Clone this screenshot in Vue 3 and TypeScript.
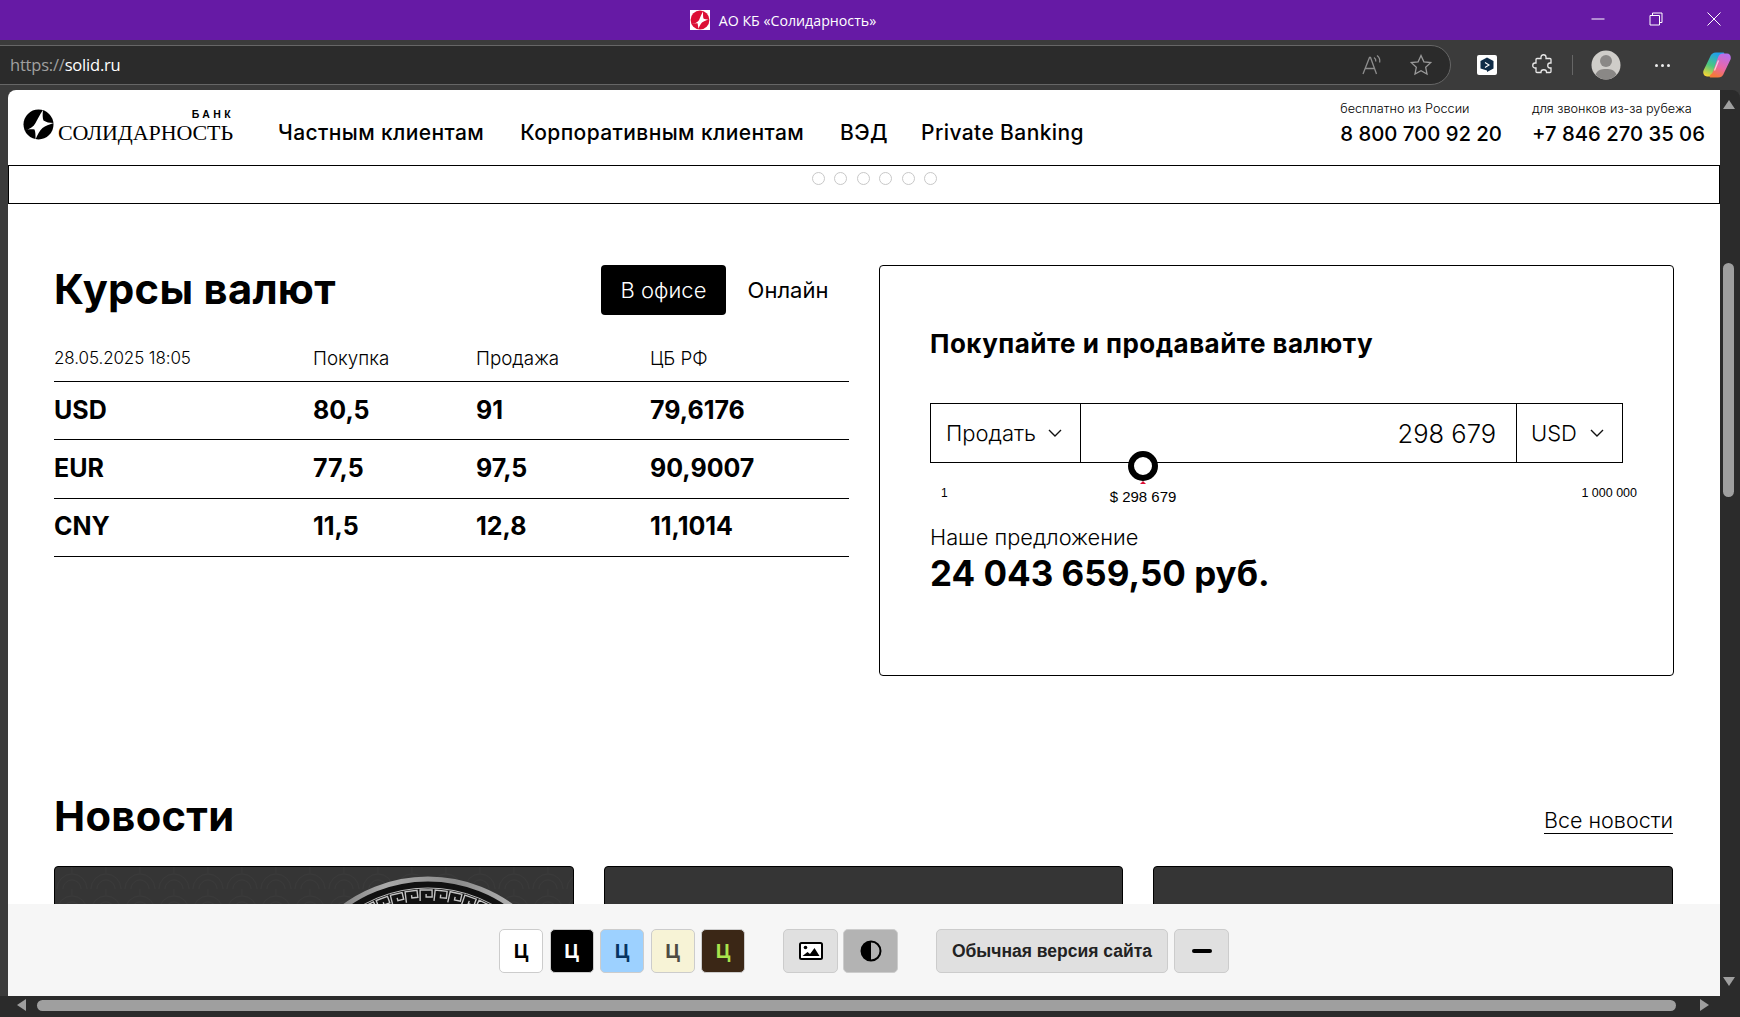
<template>
  <div class="window">
    <!-- Browser chrome -->
    <div class="titlebar">
      <div class="title">
        <span class="favicon">
          <svg width="20" height="20" viewBox="0 0 20 20">
            <rect width="20" height="20" fill="#fff" />
            <circle cx="10" cy="10" r="9.4" fill="#dc0f35" />
            <path d="M2 14C6.500 13 8.500 11.500 9.500 9 10.500 6.500 11.500 4 13 1.500 13 5 13 7 13.500 8.500 15 9.300 16.500 9.500 18.500 9.500 15.500 10.500 13.500 11.500 12 12.500 10.500 14 9.500 16 8.500 18.800 8 16.500 8 14.800 7.500 13.200 6 13 4 13.300 2 14Z" fill="#fff" />
          </svg>
        </span>
        <span>АО КБ «Солидарность»</span>
      </div>
      <div class="win-controls">
        <svg width="16" height="16" viewBox="0 0 16 16"><path d="M1.500 8h13" stroke="#fff" fill="none" /></svg>
        <svg width="16" height="16" viewBox="0 0 16 16"><path d="M2 4.500h9.500v9.500H2zM4.500 4.500V2h9.500v9.500h-2.500" stroke="#fff" fill="none" /></svg>
        <svg width="16" height="16" viewBox="0 0 16 16"><path d="M1.500 1.500l13 13M14.500 1.500l-13 13" stroke="#fff" fill="none" /></svg>
      </div>
    </div>
    <div class="toolbar">
      <div class="address">
        <div class="url"><span class="scheme">https://</span>solid.ru</div>
        <svg class="addr-icon" width="22" height="22" viewBox="0 0 22 22" fill="none" stroke="#8d8d8d" stroke-width="1.300">
          <path d="M2 20L8.500 3.500h1L15.500 20M4.500 14.500h8.500" />
          <path d="M13 3.500c1.500 1 2 2.500 1.800 4M16 1.500c2.300 1.700 3.200 4 2.700 7" />
        </svg>
        <svg class="addr-icon star" width="24" height="24" viewBox="0 0 24 24" fill="none" stroke="#9a9a9a" stroke-width="1.300">
          <path d="M12 2.500l2.900 6.300 6.800.8-5 4.700 1.300 6.800-6-3.400-6 3.400 1.300-6.800-5-4.700 6.800-.8z" />
        </svg>
      </div>
      <div class="tools">
        <span class="deepl">
          <svg width="20" height="20" viewBox="0 0 20 20">
            <rect width="20" height="20" rx="2" fill="#fff" />
            <path d="M10 2.500l6.500 3.500v7.500L10 17v-1.500L3.500 13.500V6z" fill="#0f2b46" />
            <path d="M8 7.500l4 2.500-4 2.500" fill="none" stroke="#fff" stroke-width="1.100" />
          </svg>
        </span>
        <svg class="puzzle" width="22" height="24" viewBox="0 0 22 24" fill="none" stroke="#e8e8e8" stroke-width="1.300">
          <path d="M9 4c0-3 5-3 5 0v1.500h4c.8 0 1 .5 1 1V10h-1c-3 0-3 5 0 5h1v3.500c0 .7-.4 1-1 1h-3.500V19c0-3-5.500-3-5.500 0v.5H5c-.7 0-1-.4-1-1V15H3c-3 0-3-5 0-5h1V6.500c0-.7.400-1 1-1h4z" />
        </svg>
        <span class="tool-sep"></span>
        <span class="avatar">
          <svg width="30" height="30" viewBox="0 0 30 30">
            <circle cx="15" cy="15" r="14.500" fill="#cfcdc9" />
            <circle cx="15" cy="11" r="6" fill="#8a8886" />
            <path d="M4.500 24.500C6.500 20 10 19 15 19s8.500 1 10.500 5.500C23 27.800 19 29.500 15 29.500S7 27.800 4.500 24.500Z" fill="#8a8886" />
          </svg>
        </span>
        <span class="more"><i></i><i></i><i></i></span>
        <svg class="copilot" width="28" height="26" viewBox="0 0 28 26">
          <defs>
            <linearGradient id="cp-a" x1="0.600" y1="0" x2="0.200" y2="1">
              <stop offset="0" stop-color="#1f9fef" />
              <stop offset="0.550" stop-color="#4cc77f" />
              <stop offset="1" stop-color="#f9d633" />
            </linearGradient>
            <linearGradient id="cp-b" x1="0.800" y1="0" x2="0.400" y2="1">
              <stop offset="0" stop-color="#b56ff0" />
              <stop offset="0.600" stop-color="#ea67a6" />
              <stop offset="1" stop-color="#f5793a" />
            </linearGradient>
          </defs>
          <path d="M7 5C8 2 10 .5 13 .5h7c1.500 0 1.500 1 1 2-.8 1.500-2 1.500-3 4l-5 14c-.8 2.500-2.500 4-5 4H4C1 24.500-.5 21.500.5 18.500z" fill="url(#cp-a)" />
          <path d="M21 21c-1 3-3 4.500-6 4.500H8c-1.500 0-1.500-1-1-2 .8-1.500 2-1.500 3-4l5-14c.8-2.500 2.500-4 5-4h4c3 0 4.500 3 3.500 6z" fill="url(#cp-b)" />
          <path d="M15.500 8.500l-4 10" stroke="#fff" stroke-opacity="0.700" stroke-width="1.200" fill="none" />
        </svg>
      </div>
    </div>

    <div class="viewport">
      <div class="page">
        <!-- Site header -->
        <header class="site-header">
          <div class="logo">
            <svg class="logo-mark" width="31" height="31" viewBox="0 0 31 31">
              <circle cx="15.500" cy="15.500" r="15" fill="#000" />
              <path d="M1 21.500C6.500 20.300 10.500 18 12.500 14 14.500 10 17 5.500 20 1 19.500 5.500 19.500 9 20.500 11.500 23 13.200 26.500 14 30.500 14 26 15.500 22.500 17 19.500 19 16.500 22 14.500 25.500 12.500 30.500 12.500 26 12.500 23 11.500 20.500 8 20 5 20.500 1 21.500Z" fill="#fff" />
            </svg>
            <div class="logo-words">
              <span class="logo-bank">БАНК</span>
              <span class="logo-name">СОЛИДАРНОСТЬ</span>
            </div>
          </div>
          <nav class="nav">
            <a v-for="item in navItems" :key="item">{{ item }}</a>
          </nav>
          <div class="phones">
            <div v-for="p in phones" :key="p.number" class="phone">
              <span class="phone-note">{{ p.note }}</span>
              <span class="phone-number">{{ p.number }}</span>
            </div>
          </div>
        </header>

        <div class="slider-strip">
          <span v-for="n in 6" :key="n" class="dot"></span>
        </div>

        <!-- Rates and converter -->
        <section class="rates-section">
          <div class="rates">
            <div class="rates-head">
              <h2 class="h-big">Курсы валют</h2>
              <div class="tabs">
                <span class="tab active">В офисе</span>
                <span class="tab">Онлайн</span>
              </div>
            </div>
            <div class="rate-row rate-caption">
              <span class="rate-date">28.05.2025 18:05</span>
              <span>Покупка</span>
              <span>Продажа</span>
              <span>ЦБ РФ</span>
            </div>
            <div v-for="r in rates" :key="r.code" class="rate-row rate-value">
              <span>{{ r.code }}</span>
              <span>{{ r.buy }}</span>
              <span>{{ r.sell }}</span>
              <span>{{ r.cb }}</span>
            </div>
          </div>

          <div class="converter">
            <h3 class="conv-title">Покупайте и продавайте валюту</h3>
            <div class="conv-form">
              <div class="conv-cell conv-action">
                <span>Продать</span>
                <svg width="14" height="8" viewBox="0 0 14 8" fill="none" stroke="#111" stroke-width="1.400"><path d="M1 1l6 6 6-6" /></svg>
              </div>
              <div class="conv-cell conv-amount">298 679</div>
              <div class="conv-cell conv-currency">
                <span>USD</span>
                <svg width="14" height="8" viewBox="0 0 14 8" fill="none" stroke="#111" stroke-width="1.400"><path d="M1 1l6 6 6-6" /></svg>
              </div>
              <span class="knob"><i class="knob-tick"></i></span>
            </div>
            <div class="scale">
              <span class="scale-min">1</span>
              <span class="scale-cur">$ 298 679</span>
              <span class="scale-max">1 000 000</span>
            </div>
            <div class="offer-label">Наше предложение</div>
            <div class="offer-value">24 043 659,50 руб.</div>
          </div>
        </section>

        <!-- News -->
        <section class="news">
          <div class="news-head">
            <h2 class="h-big">Новости</h2>
            <a class="all-news">Все новости</a>
          </div>
          <div class="news-grid">
            <div class="news-card">
              <svg class="medal" width="518" height="40" viewBox="0 0 518 40">
                <defs>
                  <linearGradient id="rim" x1="0" y1="0" x2="1" y2="0">
                    <stop offset="0" stop-color="#555" />
                    <stop offset="0.350" stop-color="#aaa" />
                    <stop offset="0.600" stop-color="#8a8a8a" />
                    <stop offset="1" stop-color="#d8d8d8" />
                  </linearGradient>
                  <pattern id="weave" width="34" height="22" patternUnits="userSpaceOnUse">
                    <path d="M2 22a15 15 0 0 1 30 0M8 22a9 9 0 0 1 18 0M17 0v6" fill="none" stroke="#3a3a3a" />
                  </pattern>
                </defs>
                <rect width="518" height="40" fill="url(#weave)" />
                <circle cx="373" cy="154" r="142" fill="#111" stroke="url(#rim)" stroke-width="5" />
                <circle cx="373" cy="154" r="133" fill="none" stroke="#bdbdbd" />
                <path v-for="(t, i) in meander" :key="i" :transform="t" d="M-7 12V1H5V8H-1V5" fill="none" stroke="#c4c4c4" stroke-width="1.400" />
              </svg>
            </div>
            <div class="news-card"></div>
            <div class="news-card"></div>
          </div>
        </section>

        <!-- Accessibility panel, pinned over the page -->
        <div class="a11y">
          <div class="a11y-group swatch-group">
            <button v-for="s in swatches" :key="s.cls" class="swatch" :class="s.cls">Ц</button>
          </div>
          <div class="a11y-group mode-group">
            <button class="mode">
              <svg width="24" height="18" viewBox="0 0 24 18">
                <rect x="1" y="1" width="22" height="16" rx="1.500" fill="#fff" stroke="#000" stroke-width="2" />
                <circle cx="6.500" cy="5.500" r="1.800" fill="#000" />
                <path d="M3.500 14l5-4 2.500 2 4.500-6 5 8z" fill="#000" />
              </svg>
            </button>
            <button class="mode pressed">
              <svg width="22" height="22" viewBox="0 0 22 22">
                <circle cx="11" cy="11" r="9.500" fill="none" stroke="#000" stroke-width="2" />
                <path d="M11 1.500a9.500 9.500 0 0 0 0 19z" fill="#000" />
              </svg>
            </button>
          </div>
          <div class="a11y-group plain-group">
            <button class="plain">Обычная версия сайта</button>
            <button class="plain collapse"><i></i></button>
          </div>
        </div>
      </div>

      <!-- Vertical scrollbar -->
      <div class="vscroll">
        <span class="arrow-up"></span>
        <span class="vthumb"></span>
        <span class="arrow-down"></span>
      </div>
    </div>

    <!-- Horizontal scrollbar -->
    <div class="hscroll">
      <span class="arrow-left"></span>
      <span class="hthumb"></span>
      <span class="arrow-right"></span>
    </div>
  </div>
</template>

<script setup lang="ts">
const navItems: string[] = ['Частным клиентам', 'Корпоративным клиентам', 'ВЭД', 'Private Banking']

const phones = [
  { note: 'бесплатно из России', number: '8 800 700 92 20' },
  { note: 'для звонков из-за рубежа', number: '+7 846 270 35 06' },
]

const rates = [
  { code: 'USD', buy: '80,5', sell: '91', cb: '79,6176' },
  { code: 'EUR', buy: '77,5', sell: '97,5', cb: '90,9007' },
  { code: 'CNY', buy: '11,5', sell: '12,8', cb: '11,1014' },
]

const swatches = [
  { cls: 'sw-white' },
  { cls: 'sw-black' },
  { cls: 'sw-blue' },
  { cls: 'sw-cream' },
  { cls: 'sw-brown' },
]

// greek key border of the medal, one unit every 6.6 degrees round the circle
const meander: string[] = []
for (let a = -40; a <= 40; a += 6.6) {
  meander.push(`rotate(${a} 373 154) translate(373 22)`)
}
</script>

<style scoped>
.window {
  width: 1740px;
  height: 1017px;
  display: flex;
  flex-direction: column;
  overflow: hidden;
  background: #3b3b3b;
  font-family: Inter, "Noto Sans", sans-serif;
  color: #000;
}

.titlebar {
  height: 40px;
  flex: none;
  background: #661aa5;
  position: relative;
  display: flex;
  align-items: center;
  justify-content: center;
  padding-right: 174px;
  box-sizing: border-box;
}

.title {
  display: flex;
  align-items: center;
  gap: 9px;
  font-family: "Open Sans", sans-serif;
  font-size: 14.200px;
  color: #fff;
}

.favicon {
  display: flex;
}

.win-controls {
  position: absolute;
  right: 18px;
  top: 11px;
  display: flex;
  gap: 42px;
}

.toolbar {
  height: 50px;
  flex: none;
  display: flex;
  background: #3b3b3b;
}

.address {
  width: 1453px;
  height: 40px;
  margin-top: 5px;
  box-sizing: border-box;
  margin-left: -2px;
  padding: 0 17px 0 11px;
  background: #2b2b2b;
  border: 1px solid #666;
  border-radius: 0 20px 20px 0;
  display: flex;
  align-items: center;
}

.url {
  flex: 1;
  margin-top: -2px;
  font-family: "Open Sans", sans-serif;
  font-size: 16.500px;
  letter-spacing: -0.200px;
  color: #fff;
}

.scheme {
  color: #a0a0a0;
}

.addr-icon {
  flex: none;
}

.star {
  margin-left: 26px;
}

.tools {
  flex: 1;
  display: flex;
  align-items: center;
  padding-left: 26px;
  height: 50px;
}

.deepl {
  display: flex;
}

.puzzle {
  margin-left: 35px;
}

.tool-sep {
  width: 1px;
  height: 20px;
  background: #666;
  margin-left: 18px;
}

.avatar {
  display: flex;
  margin-left: 18px;
}

.more {
  display: flex;
  gap: 3px;
  margin-left: 34px;
}

.more i {
  width: 3px;
  height: 3px;
  border-radius: 50%;
  background: #eee;
}

.copilot {
  margin-left: 33px;
}

.viewport {
  flex: 1;
  min-height: 0;
  display: flex;
  padding-left: 8px;
}

.page {
  flex: 1;
  min-width: 0;
  position: relative;
  overflow: hidden;
  background: #fff;
  border-top-left-radius: 8px;
}

.site-header {
  height: 76px;
  box-sizing: border-box;
  border-bottom: 1px solid #000;
  display: flex;
  padding-left: 15px;
}

.logo {
  display: flex;
  flex: none;
  width: 255px;
  height: 40px;
  margin-top: 19px;
}

.logo-mark {
  flex: none;
}

.logo-words {
  display: flex;
  flex-direction: column;
  align-items: flex-end;
  margin-left: 4px;
  width: 175px;
}

.logo-bank {
  font-family: "Liberation Sans", sans-serif;
  font-weight: 700;
  font-size: 10.500px;
  line-height: 11px;
  letter-spacing: 3.400px;
  margin-right: -1px;
}

.logo-name {
  font-family: "Liberation Serif", serif;
  font-size: 22px;
  line-height: 23px;
  letter-spacing: -0.100px;
  white-space: nowrap;
  margin-top: 1px;
}

.nav {
  display: flex;
  gap: 36px;
  padding-top: 28px;
  font-size: 21px;
  font-weight: 500;
  line-height: 30px;
  letter-spacing: 0.400px;
  white-space: nowrap;
}

.nav a:last-child {
  margin-left: -3px;
}

.phones {
  margin-left: auto;
  display: flex;
  gap: 30px;
  padding-right: 15px;
}

.phone {
  display: flex;
  flex-direction: column;
}

.phone-note {
  font-size: 12.700px;
  font-weight: 300;
  line-height: 18px;
  margin-top: 10px;
  white-space: nowrap;
}

.phone-number {
  font-size: 20.300px;
  font-weight: 500;
  line-height: 30px;
  margin-top: 1px;
  white-space: nowrap;
}

.slider-strip {
  height: 38px;
  box-sizing: border-box;
  border-bottom: 1px solid #000;
  border-right: 1px solid #000;
  border-left: 1px solid #000;
  display: flex;
  justify-content: center;
  gap: 9.500px;
  padding-top: 6px;
  padding-left: 21px;
}

.dot {
  width: 13px;
  height: 13px;
  box-sizing: border-box;
  border: 1px solid #c8c8c8;
  border-radius: 50%;
}

.rates-section {
  display: grid;
  grid-template-columns: 795px 795px;
  gap: 30px;
  padding: 61px 46px 0;
}

.rates-head {
  display: flex;
  align-items: center;
  justify-content: space-between;
  height: 50px;
  margin-bottom: 15px;
}

.h-big {
  margin: 0;
  font-size: 41.700px;
  font-weight: 700;
  letter-spacing: 0.300px;
  line-height: 48px;
  padding-bottom: 2px;
}

.tabs {
  display: flex;
  margin-right: -1px;
}

.tab {
  width: 124px;
  height: 50px;
  box-sizing: border-box;
  display: flex;
  align-items: center;
  justify-content: center;
  font-size: 22px;
  font-weight: 400;
  border-radius: 4px;
  white-space: nowrap;
}

.tab.active {
  width: 125px;
  background: #000;
  color: #fff;
  font-weight: 300;
}

.rate-row {
  display: grid;
  grid-template-columns: 259px 163px 174px 1fr;
  align-items: center;
  border-bottom: 1px solid #000;
  box-sizing: border-box;
}

.rate-caption {
  height: 52px;
  font-size: 18.800px;
  font-weight: 300;
  padding-top: 5px;
}

.rate-date {
  font-size: 17px;
  letter-spacing: -0.100px;
}

.rate-value {
  height: 58.400px;
  font-size: 25px;
  font-weight: 700;
  padding-bottom: 2px;
}

.converter {
  height: 411px;
  box-sizing: border-box;
  border: 1px solid #000;
  border-radius: 4px;
  padding: 60px 50px 0;
}

.conv-title {
  margin: 0 0 41px;
  font-size: 26px;
  font-weight: 700;
  letter-spacing: 0.480px;
  line-height: 36px;
  white-space: nowrap;
}

.conv-form {
  position: relative;
  display: flex;
  width: 693px;
  height: 60px;
  box-sizing: border-box;
  border: 1px solid #000;
}

.conv-cell {
  display: flex;
  align-items: center;
  font-size: 22px;
  font-weight: 300;
}

.conv-action {
  width: 150px;
  box-sizing: border-box;
  padding: 0 18px 0 15px;
  justify-content: space-between;
  border-right: 1px solid #000;
}

.conv-amount {
  flex: 1;
  justify-content: flex-end;
  padding-right: 20px;
  font-size: 25.500px;
}

.conv-currency {
  width: 106px;
  box-sizing: border-box;
  padding: 0 18px 0 14px;
  justify-content: space-between;
  border-left: 1px solid #000;
}

.knob {
  position: absolute;
  left: 197px;
  top: 47px;
  width: 30px;
  height: 30px;
  box-sizing: border-box;
  border: 6px solid #000;
  border-radius: 50%;
  background: #fff;
}

.knob-tick {
  position: absolute;
  left: 6px;
  top: 24px;
  width: 0;
  height: 0;
  border-left: 3px solid transparent;
  border-right: 3px solid transparent;
  border-bottom: 3px solid #dc0f35;
}

.scale {
  position: relative;
  height: 60px;
  width: 707px;
  font-family: "Liberation Sans", sans-serif;
  font-size: 13px;
  line-height: 16px;
}

.scale-min {
  position: absolute;
  left: 11px;
  top: 22px;
  font-size: 12px;
}

.scale-cur {
  position: absolute;
  left: 213px;
  top: 26px;
  transform: translateX(-50%);
  white-space: nowrap;
  font-size: 15px;
}

.scale-max {
  position: absolute;
  right: 0;
  top: 22px;
  font-size: 12.500px;
}

.offer-label {
  font-size: 21.800px;
  font-weight: 300;
  line-height: 29px;
  white-space: nowrap;
}

.offer-value {
  font-size: 35px;
  font-weight: 700;
  line-height: 43px;
  white-space: nowrap;
}

.news {
  padding: 116px 47px 0 46px;
}

.news-head {
  display: flex;
  justify-content: space-between;
  align-items: flex-start;
  height: 74px;
}

.all-news {
  font-size: 21.500px;
  font-weight: 300;
  line-height: 26px;
  margin-top: 15px;
  border-bottom: 1px solid #000;
}

.news-grid {
  display: grid;
  grid-template-columns: repeat(3, 1fr);
  gap: 30px;
}

.news-card {
  height: 260px;
  box-sizing: border-box;
  border: 1px solid #000;
  border-radius: 4px;
  background: #353535;
  overflow: hidden;
}

.medal {
  display: block;
}

.a11y {
  position: absolute;
  left: 0;
  right: 0;
  bottom: 0;
  height: 92px;
  background: #f6f6f6;
  display: flex;
  justify-content: center;
  align-items: flex-start;
  padding-top: 25px;
  box-sizing: border-box;
}

.a11y-group {
  display: flex;
  gap: 6px;
}

.swatch-group {
  gap: 6.500px;
}

.mode-group {
  margin-left: 38px;
  gap: 5px;
}

.plain-group {
  margin-left: 38px;
}

.a11y button {
  height: 44px;
  box-sizing: border-box;
  border: 1px solid #ccc;
  border-radius: 5px;
  padding: 0;
  font-family: "Liberation Sans", sans-serif;
  font-weight: 700;
  display: flex;
  align-items: center;
  justify-content: center;
}

.swatch {
  width: 44px;
  font-size: 20px;
}

.sw-white {
  background: #fff;
  color: #000;
}

.sw-black {
  background: #000;
  color: #fff;
  border-color: #000;
}

.sw-blue {
  background: #9dd1ff;
  color: #063462;
}

.sw-cream {
  background: #f7f3d6;
  color: #4d4b43;
}

.sw-brown {
  background: #3b2716;
  color: #a9e44d;
}

.mode {
  width: 55px;
  background: #e0e0e0;
}

.mode.pressed {
  background: #b3b3b3;
}

.plain {
  width: 232px;
  background: #e0e0e0;
  font-size: 17.500px;
  color: #222;
}

.plain.collapse {
  width: 55px;
}

.collapse i {
  width: 20px;
  height: 4px;
  border-radius: 2px;
  background: #000;
}

.vscroll {
  width: 20px;
  flex: none;
  background: #2b2b2b;
  position: relative;
  border-top-right-radius: 8px;
}

.vthumb {
  position: absolute;
  left: 3px;
  top: 173px;
  width: 11px;
  height: 234px;
  border-radius: 6px;
  background: #9f9f9f;
}

.arrow-up,
.arrow-down {
  position: absolute;
  left: 3px;
  width: 0;
  height: 0;
  border-left: 6px solid transparent;
  border-right: 6px solid transparent;
}

.arrow-up {
  top: 10px;
  border-bottom: 9px solid #9f9f9f;
}

.arrow-down {
  bottom: 10px;
  border-top: 9px solid #9f9f9f;
}

.hscroll {
  height: 21px;
  flex: none;
  background: #2b2b2b;
  position: relative;
}

.hthumb {
  position: absolute;
  left: 37px;
  top: 4px;
  width: 1639px;
  height: 11px;
  border-radius: 6px;
  background: #9f9f9f;
}

.arrow-left,
.arrow-right {
  position: absolute;
  top: 3px;
  width: 0;
  height: 0;
  border-top: 6px solid transparent;
  border-bottom: 6px solid transparent;
}

.arrow-left {
  left: 17px;
  border-right: 9px solid #9f9f9f;
}

.arrow-right {
  left: 1700px;
  border-left: 9px solid #9f9f9f;
}
</style>

<style>
html,
body {
  margin: 0;
  background: #3b3b3b;
  overflow: hidden;
}
</style>
